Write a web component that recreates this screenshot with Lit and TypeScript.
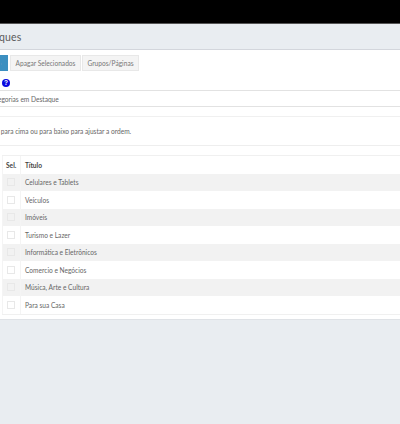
import { LitElement, html, css } from "lit";
import { customElement } from "lit/decorators.js";

const ROWS = ["Celulares e Tablets", "Veículos", "Imóveis", "Turismo e Lazer", "Informática e Eletrônicos", "Comercio e Negócios", "Música, Arte e Cultura", "Para sua Casa"];

@customElement("app-root")
export class AppRoot extends LitElement {
  static styles = css`
    :host { display: block; height: 424px; overflow: hidden; background: #e9edf1; font-family: Lato, sans-serif; color: #666; font-size: 6.6px; }
    .top { height: 23px; background: #000; border-bottom: 1px solid #555; }
    .title { height: 25px; border-bottom: 1px solid #d3d6dc; display: flex; align-items: center; font-size: 10.5px; color: #5a5a5a; overflow: hidden; white-space: nowrap; }
    .title span { margin-left: -29px; letter-spacing: 0.2px; }
    .panel { background: #fff; border-bottom: 1px solid #dfe2e6; padding-bottom: 4px; }
    .bar { height: 41px; box-sizing: border-box; padding-top: 5px; border-bottom: 1px solid #e2e2e2; }
    .btns { display: flex; gap: 1px; height: 16px; }
    .btn { height: 16px; box-sizing: border-box; border: 1px solid #e8e8e8; background: #f4f4f4; display: flex; align-items: center; justify-content: center; color: #777; }
    .b0 { width: 8px; background: #3c8fc0; border-color: #3c8fc0; color: #cfe4f2; justify-content: flex-end; overflow: hidden; white-space: nowrap; padding-right: 6px; }
    .b1 { width: 71px; margin-left: 1px; }
    .b2 { width: 57px; }
    .help { display: block; width: 8px; height: 8px; margin: 8px 0 0 2px; }
    .crumb { height: 15px; border-bottom: 1px solid #e2e2e2; display: flex; align-items: center; white-space: nowrap; overflow: hidden; }
    .crumb span { margin-left: -12px; }
    .line { height: 9px; border-bottom: 1px solid #f0f0f0; }
    .note { height: 29px; box-sizing: border-box; display: flex; align-items: center; white-space: nowrap; overflow: hidden; border-bottom: 1px solid #eee; }
    .note span { margin-left: -22px; }
    .gap { height: 9px; }
    .tbl { border-top: 1px solid #f0f0f0; border-bottom: 1px solid #f0f0f0; margin-left: 2px; }
    .row { display: grid; grid-template-columns: 19px 1fr; height: 17.5px; align-items: center; }
    .row > div { height: 100%; display: flex; align-items: center; box-sizing: border-box; }
    .row > div:first-child { border-left: 1px solid #f4f4f4; border-right: 1px solid #f4f4f4; padding-left: 4px; }
    .row > div:last-child { padding-left: 4px; }
    .head { font-weight: 700; color: #444; }
    .head > div:first-child { padding-left: 3px !important; }
    .odd { background: #f2f2f2; }
    .cb { width: 8px; height: 8px; box-sizing: border-box; border: 1px solid #e8e8e8; background: #fff; }
    .odd .cb { background: #f2f2f2; }
  `;

  render() {
    return html`
      <div class="top"></div>
      <div class="title"><span>Destaques</span></div>
      <div class="panel">
        <div class="bar">
          <div class="btns">
            <div class="btn b0">Novo</div>
            <div class="btn b1">Apagar Selecionados</div>
            <div class="btn b2">Grupos/Páginas</div>
          </div>
          <svg class="help" viewBox="0 0 16 16"><circle cx="8" cy="8" r="8" fill="#0a0ae0"/><text x="8" y="12.5" text-anchor="middle" font-size="13" font-weight="700" fill="#fff" font-family="Liberation Sans, sans-serif">?</text></svg>
        </div>
        <div class="crumb"><span>Categorias em Destaque</span></div>
        <div class="line"></div>
        <div class="note"><span>Arraste para cima ou para baixo para ajustar a ordem.</span></div>
        <div class="gap"></div>
        <div class="tbl">
          <div class="row head"><div>Sel.</div><div>Título</div></div>
          ${ROWS.map((r, i) => html`<div class="row ${i % 2 === 0 ? "odd" : ""}"><div><span class="cb"></span></div><div>${r}</div></div>`)}
        </div>
      </div>
    `;
  }
}
